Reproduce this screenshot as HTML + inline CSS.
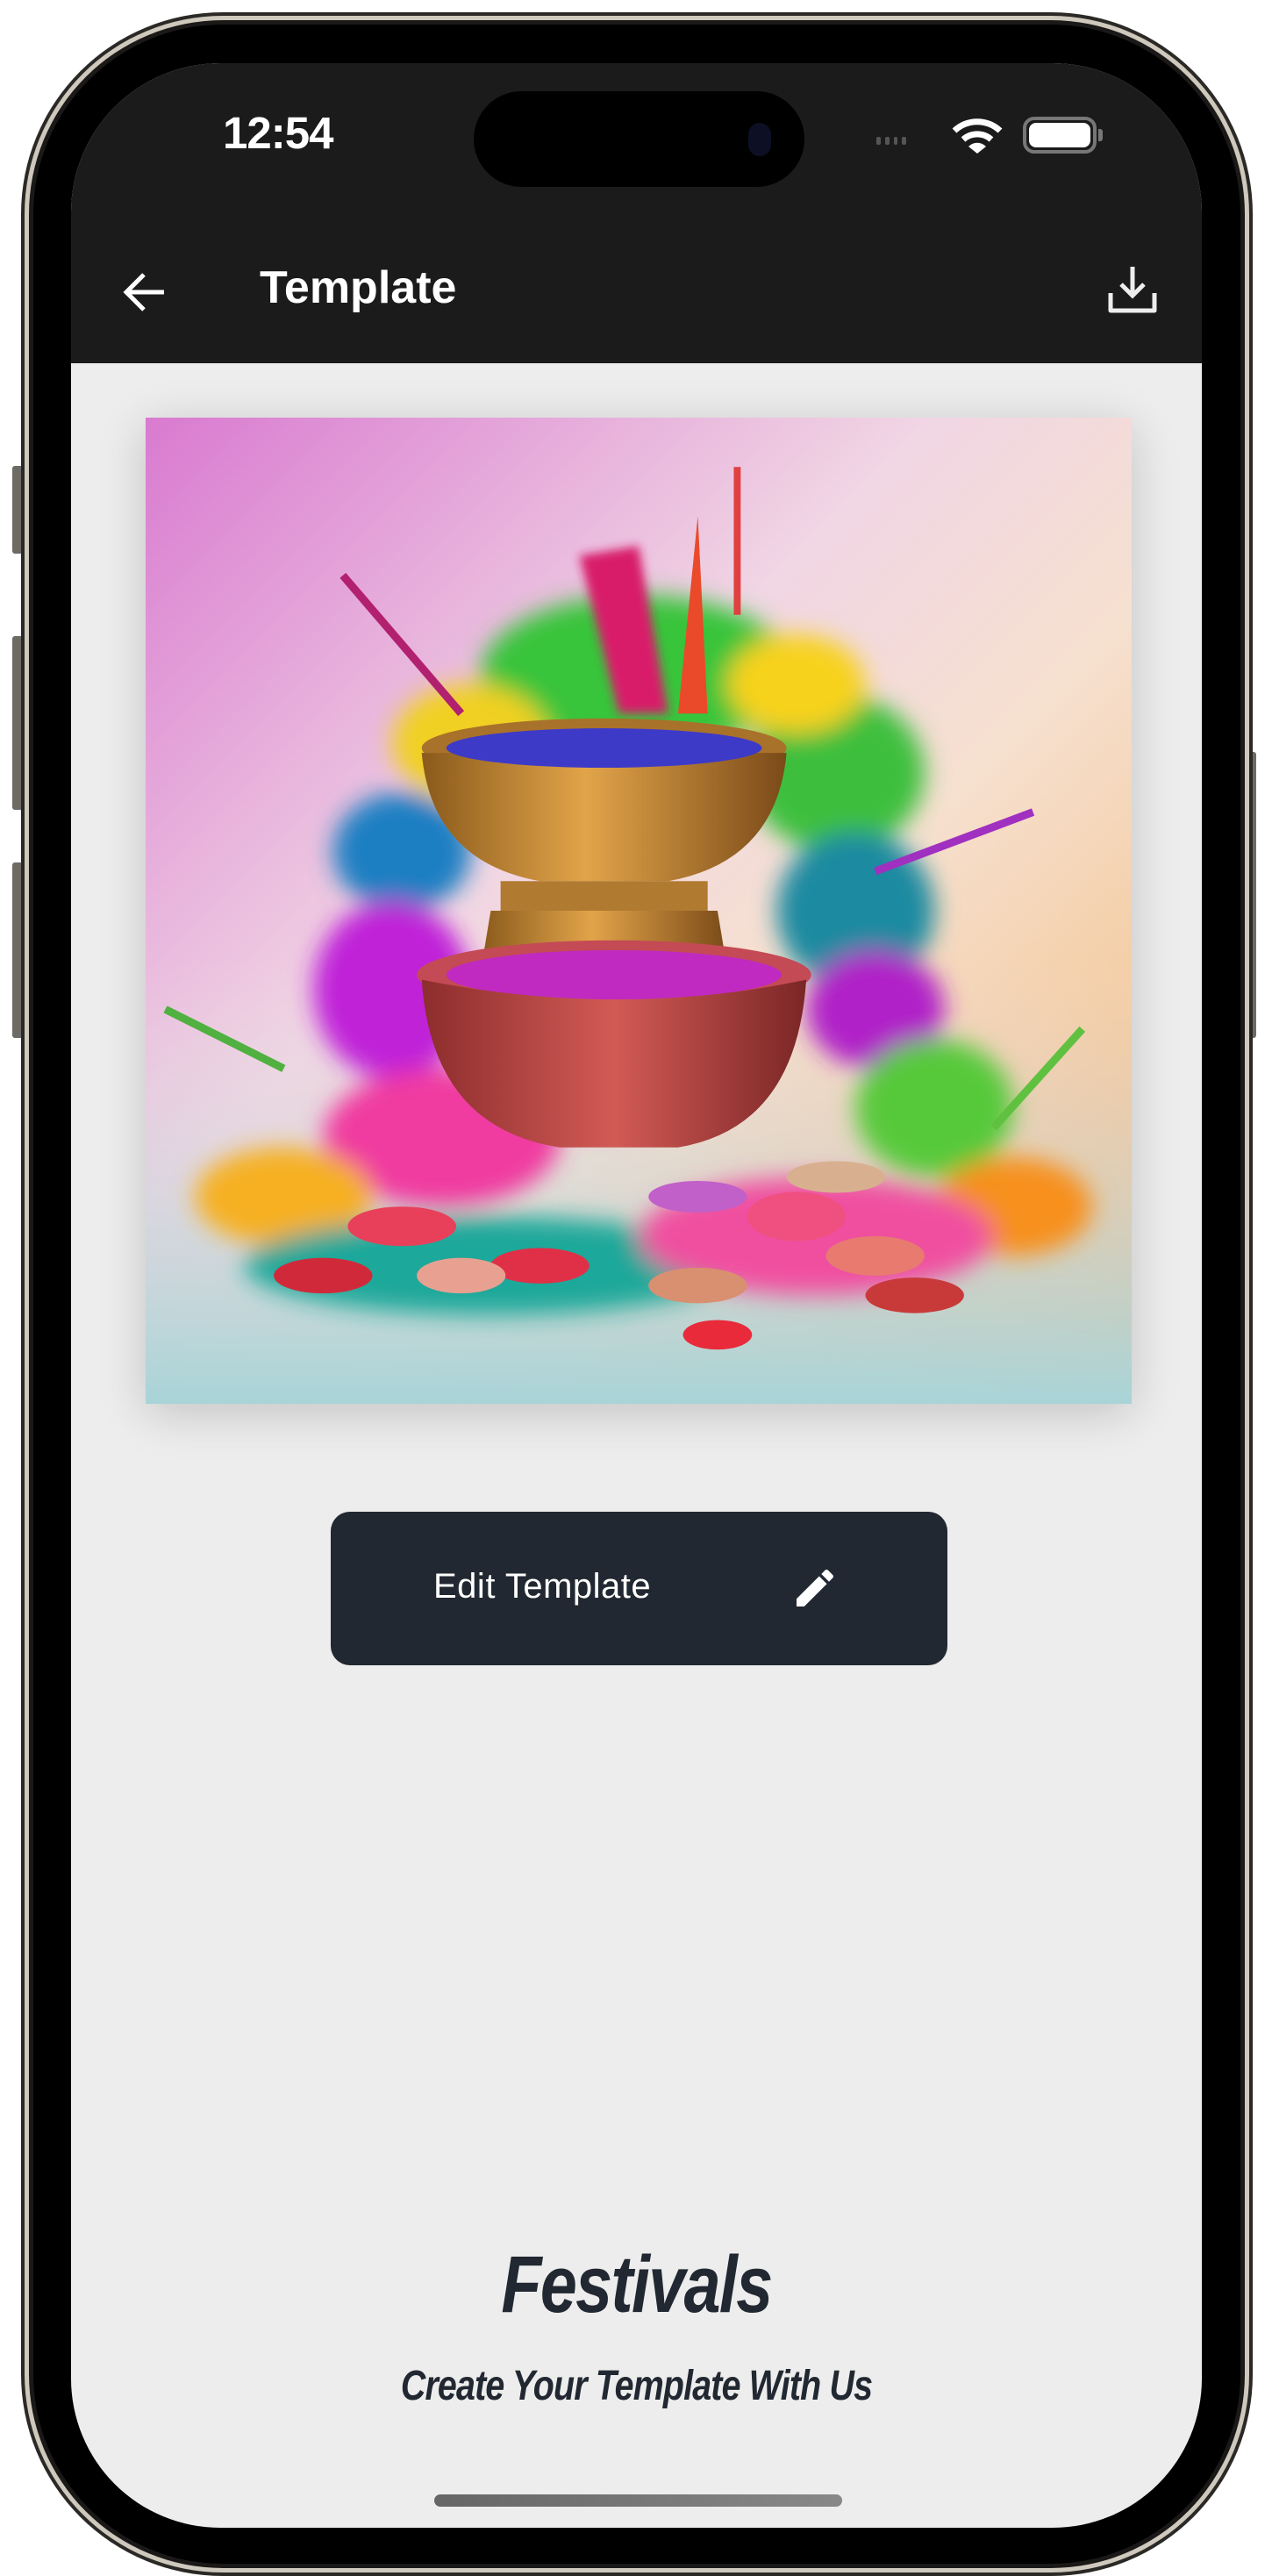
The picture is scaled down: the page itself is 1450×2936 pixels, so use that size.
<!DOCTYPE html>
<html><head><meta charset="utf-8"><style>
*{margin:0;padding:0;box-sizing:border-box}
html,body{width:1450px;height:2936px;background:#fff;overflow:hidden;font-family:"Liberation Sans",sans-serif}
.abs{position:absolute}
</style></head><body>
<div class="abs" style="left:14px;top:531px;width:14px;height:100px;background:#6e6a64;border-radius:3px"></div>
<div class="abs" style="left:14px;top:725px;width:14px;height:198px;background:#6e6a64;border-radius:3px"></div>
<div class="abs" style="left:14px;top:983px;width:14px;height:200px;background:#6e6a64;border-radius:3px"></div>
<div class="abs" style="left:1418px;top:857px;width:14px;height:326px;background:#6e6a64;border-radius:3px"></div>
<div class="abs" style="left:24px;top:14px;width:1404px;height:2922px;border-radius:230px;background:#2b2926"></div>
<div class="abs" style="left:28px;top:18px;width:1396px;height:2914px;border-radius:226px;background:#cfc8bd"></div>
<div class="abs" style="left:33px;top:23px;width:1386px;height:2904px;border-radius:221px;background:#1a1918"></div>
<div class="abs" style="left:38px;top:28px;width:1376px;height:2894px;border-radius:216px;background:#000"></div>
<div class="abs" style="left:81px;top:72px;width:1289px;height:2809px;border-radius:170px;background:#ededed;overflow:hidden">
  <div class="abs" style="left:0;top:0;width:1289px;height:342px;background:#1b1b1b"></div>
  <div class="abs" style="left:173px;top:50px;color:#fff;font-size:51px;font-weight:bold;letter-spacing:-1px">12:54</div>
  <div class="abs" style="left:459px;top:32px;width:377px;height:109px;border-radius:55px;background:#000"></div>
  <div class="abs" style="left:772px;top:68px;width:26px;height:38px;border-radius:13px;background:#0d0f24"></div>
  <div class="abs" style="left:918px;top:84px;width:34px;height:9px;display:flex;gap:5px"><span style="width:6px;height:9px;background:#555;border-radius:2px"></span><span style="width:6px;height:9px;background:#555;border-radius:2px"></span><span style="width:6px;height:9px;background:#555;border-radius:2px"></span><span style="width:6px;height:9px;background:#555;border-radius:2px"></span></div>
  <svg class="abs" style="left:1004px;top:61px" width="58" height="42" viewBox="0 0 58 42"><path d="M3 16 A38 38 0 0 1 55 16" stroke="#fff" stroke-width="7" fill="none"/><path d="M13 26 A24 24 0 0 1 45 26" stroke="#fff" stroke-width="7" fill="none"/><path d="M29 42 L19 34 A14 14 0 0 1 39 34 Z" fill="#fff"/></svg>
  <div class="abs" style="left:1085px;top:61px;width:84px;height:42px;border:4px solid #777;border-radius:13px;padding:3px"><div style="width:100%;height:100%;background:#fff;border-radius:8px"></div></div>
  <div class="abs" style="left:1171px;top:75px;width:5px;height:14px;background:#777;border-radius:0 3px 3px 0"></div>
  <svg class="abs" style="left:58px;top:236px" width="52" height="50" viewBox="0 0 52 50"><path d="M48 25H6M25 5L5 25L25 45" stroke="#fff" stroke-width="5" fill="none"/></svg>
  <div class="abs" style="left:215px;top:226px;color:#fff;font-size:52px;font-weight:bold">Template</div>
  <svg class="abs" style="left:1182px;top:230px" width="56" height="56" viewBox="0 0 56 56"><path d="M28 2V34M15 22L28 35L41 22" stroke="#eee" stroke-width="5" fill="none"/><path d="M3 32V52H53V32" stroke="#eee" stroke-width="5" fill="none" stroke-linejoin="round"/></svg>
  <div class="abs" style="left:85px;top:404px;width:1124px;height:1124px;box-shadow:0 10px 50px rgba(0,0,0,0.18);overflow:hidden;background:linear-gradient(135deg,#d97ad0 0%,#f1d6e4 40%,#f6e0cf 60%,#f2b976 100%)">
  <svg width="1124" height="1124" viewBox="0 0 100 100" preserveAspectRatio="none">
   <defs><filter id="b"><feGaussianBlur stdDeviation="1.2"/></filter><filter id="s"><feGaussianBlur stdDeviation="0.5"/></filter>
   <linearGradient id="bg2" x1="0" y1="0" x2="0" y2="1"><stop offset="0" stop-color="#e9d9de" stop-opacity="0"/><stop offset="1" stop-color="#a8d4d8"/></linearGradient>
   <linearGradient id="g1" x1="0" x2="1"><stop offset="0" stop-color="#8a5a1c"/><stop offset="0.45" stop-color="#e2a449"/><stop offset="1" stop-color="#7a4a18"/></linearGradient>
   <linearGradient id="g2" x1="0" x2="1"><stop offset="0" stop-color="#8c2d2d"/><stop offset="0.5" stop-color="#d25a55"/><stop offset="1" stop-color="#7a2626"/></linearGradient></defs>
   <rect x="0" y="55" width="100" height="45" fill="url(#bg2)"/>
   <g filter="url(#b)">
    <ellipse cx="50" cy="26" rx="16" ry="8" fill="#38c43a"/>
    <ellipse cx="70" cy="36" rx="9" ry="8" fill="#3cbf3c"/>
    <ellipse cx="33" cy="33" rx="8" ry="6" fill="#f0d020"/>
    <ellipse cx="66" cy="27" rx="7" ry="5" fill="#f7d21a"/>
    <ellipse cx="26" cy="44" rx="7" ry="6" fill="#1b7fc2"/>
    <ellipse cx="72" cy="50" rx="8" ry="8" fill="#1b8aa0"/>
    <ellipse cx="25" cy="58" rx="8" ry="9" fill="#c020d8"/>
    <ellipse cx="74" cy="60" rx="7" ry="6" fill="#b020c8"/>
    <ellipse cx="30" cy="73" rx="12" ry="7" fill="#f03aa0"/>
    <ellipse cx="80" cy="70" rx="8" ry="7" fill="#56c93a"/>
    <ellipse cx="14" cy="79" rx="9" ry="5" fill="#f6b020"/>
    <ellipse cx="88" cy="80" rx="8" ry="5" fill="#f7901c"/>
    <ellipse cx="35" cy="86" rx="25" ry="5" fill="#1fa89a"/>
    <ellipse cx="68" cy="83" rx="18" ry="6" fill="#f04fa0"/>
    <ellipse cx="46" cy="66" rx="10" ry="6" fill="#c24ac8"/>
   </g>
   <path d="M44 14 L48 30 L53 30 L50 13Z" fill="#d81a6a" filter="url(#s)"/>
   <path d="M56 10 L54 30 L57 30Z" fill="#ea4a2a"/>
   <path d="M20 16 L32 30" stroke="#b22070" stroke-width="0.8"/>
   <path d="M60 5 L60 20" stroke="#e04040" stroke-width="0.7"/>
   <path d="M90 40 L74 46" stroke="#a030c0" stroke-width="0.8"/>
   <path d="M2 60 L14 66" stroke="#50b040" stroke-width="0.8"/>
   <path d="M95 62 L86 72" stroke="#60c040" stroke-width="0.8"/>
   <ellipse cx="46.5" cy="33.5" rx="18.5" ry="3" fill="#a9722a"/>
   <path d="M28 34 Q29 45 40 47 L53 47 Q64 45 65 34Z" fill="url(#g1)"/>
   <ellipse cx="46.5" cy="33.5" rx="16" ry="2" fill="#3d3ac8"/>
   <rect x="36" y="47" width="21" height="3" fill="#b07a30"/>
   <path d="M35 50 L58 50 L59 56 L34 56Z" fill="url(#g1)"/>
   <ellipse cx="47.5" cy="56.5" rx="20" ry="3.5" fill="#c44a55"/>
   <ellipse cx="47.5" cy="56.5" rx="17" ry="2.5" fill="#c02ac0"/>
   <path d="M28 57 Q29 72 42 74 L54 74 Q66 72 67 57 Q48 61 28 57Z" fill="url(#g2)"/>
   <g>
    <ellipse cx="26" cy="82" rx="5.5" ry="2" fill="#e8405a"/>
    <ellipse cx="40" cy="86" rx="5" ry="1.8" fill="#e03048"/>
    <ellipse cx="18" cy="87" rx="5" ry="1.8" fill="#d02a3a"/>
    <ellipse cx="32" cy="87" rx="4.5" ry="1.8" fill="#e8a090"/>
    <ellipse cx="56" cy="79" rx="5" ry="1.6" fill="#c060c8"/>
    <ellipse cx="66" cy="81" rx="5" ry="2.5" fill="#f05080"/>
    <ellipse cx="70" cy="77" rx="5" ry="1.6" fill="#d8b090"/>
    <ellipse cx="56" cy="88" rx="5" ry="1.8" fill="#d89070"/>
    <ellipse cx="74" cy="85" rx="5" ry="2" fill="#e87a70"/>
    <ellipse cx="58" cy="93" rx="3.5" ry="1.5" fill="#e82a3a"/>
    <ellipse cx="78" cy="89" rx="5" ry="1.8" fill="#c83a3a"/>
   </g>
  </svg>
  </div>
  <div class="abs" style="left:296px;top:1651px;width:703px;height:175px;background:#222831;border-radius:22px"></div>
  <div class="abs" style="left:413px;top:1714px;color:#fff;font-size:40px;letter-spacing:0.5px">Edit Template</div>
  <svg class="abs" style="left:820px;top:1710px" width="56" height="56" viewBox="0 0 24 24"><path d="M3 17.25V21h3.75L17.81 9.94l-3.75-3.75L3 17.25zM20.71 7.04a1 1 0 0 0 0-1.41l-2.34-2.34a1 1 0 0 0-1.41 0l-1.83 1.83 3.75 3.75 1.83-1.83z" fill="#fff"/></svg>
  <div class="abs" style="left:0;top:2480px;width:1289px;text-align:center;color:#222831;font-size:92px;font-weight:bold;font-style:italic;letter-spacing:-2px;transform:scaleX(0.82)">Festivals</div>
  <div class="abs" style="left:0;top:2620px;width:1289px;text-align:center;color:#222831;font-size:48px;font-weight:bold;font-style:italic;letter-spacing:-1px;transform:scaleX(0.82)">Create Your Template With Us</div>
  <div class="abs" style="left:414px;top:2771px;width:465px;height:14px;border-radius:7px;background:linear-gradient(90deg,#666,#888)"></div>
</div>
</body></html>
